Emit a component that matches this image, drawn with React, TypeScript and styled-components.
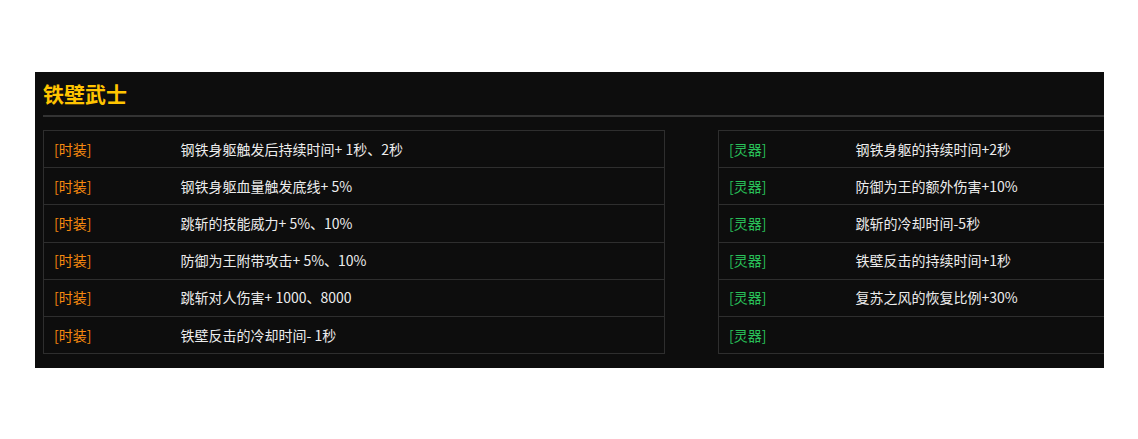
import React from "react";
import styled, { createGlobalStyle } from "styled-components";

const GlobalStyle = createGlobalStyle`
  html, body {
    margin: 0;
    padding: 0;
    background: #ffffff;
  }
  body {
    font-family: "Noto Sans CJK SC", "Noto Sans", sans-serif;
  }
`;

const fashion = [
  "钢铁身躯触发后持续时间+ 1秒、2秒",
  "钢铁身躯血量触发底线+ 5%",
  "跳斩的技能威力+ 5%、10%",
  "防御为王附带攻击+ 5%、10%",
  "跳斩对人伤害+ 1000、8000",
  "铁壁反击的冷却时间- 1秒",
];

const spirit = [
  "钢铁身躯的持续时间+2秒",
  "防御为王的额外伤害+10%",
  "跳斩的冷却时间-5秒",
  "铁壁反击的持续时间+1秒",
  "复苏之风的恢复比例+30%",
  "",
];

function App() {
  return (
    <>
      <GlobalStyle />
      <Page>
        <Panel>
          <Title>铁壁武士</Title>
          <Divider />
          <Tables>
            <EffectTable tag="[时装]" tone="fashion" rows={fashion} />
            <EffectTable tag="[灵器]" tone="spirit" rows={spirit} />
          </Tables>
        </Panel>
      </Page>
    </>
  );
}

function EffectTable({
  tag,
  tone,
  rows,
}: {
  tag: string;
  tone: "fashion" | "spirit";
  rows: string[];
}) {
  return (
    <Table>
      <tbody>
        {rows.map((text, i) => (
          <tr key={i}>
            <TagCell $tone={tone}>{tag}</TagCell>
            <TextCell>{text}</TextCell>
          </tr>
        ))}
      </tbody>
    </Table>
  );
}

const Page = styled.div`
  padding: 72px 0 0 35px;
`;

const Panel = styled.div`
  width: 1069px;
  height: 296px;
  background: #0d0d0d;
  overflow: hidden;
  box-sizing: border-box;
  padding: 0 0 0 8px;
`;

const Title = styled.h2`
  margin: 0;
  height: 43px;
  line-height: 43px;
  font-size: 21px;
  font-weight: 700;
  color: #ffc400;
`;

const Divider = styled.div`
  height: 2px;
  background: #333333;
`;

const Tables = styled.div`
  display: flex;
  gap: 53px;
  margin-top: 13px;
`;

const Table = styled.table`
  flex-shrink: 0;
  width: 622px;
  table-layout: fixed;
  border-collapse: collapse;
  font-size: 14px;

  td {
    box-sizing: border-box;
    height: 37.2px;
    padding: 0 10px 1px;
    border: 1px solid #2e2e2e;
    border-left: none;
    border-right: none;
    vertical-align: middle;
    line-height: 20px;
    white-space: nowrap;
  }
  tr td:first-child {
    border-left: 1px solid #2e2e2e;
  }
  tr td:last-child {
    border-right: 1px solid #2e2e2e;
  }
`;

const TagCell = styled.td<{ $tone: "fashion" | "spirit" }>`
  width: 127px;
  color: ${(p) => (p.$tone === "fashion" ? "#f7890f" : "#29c25a")};
`;

const TextCell = styled.td`
  color: #ececec;
`;

export default App;
